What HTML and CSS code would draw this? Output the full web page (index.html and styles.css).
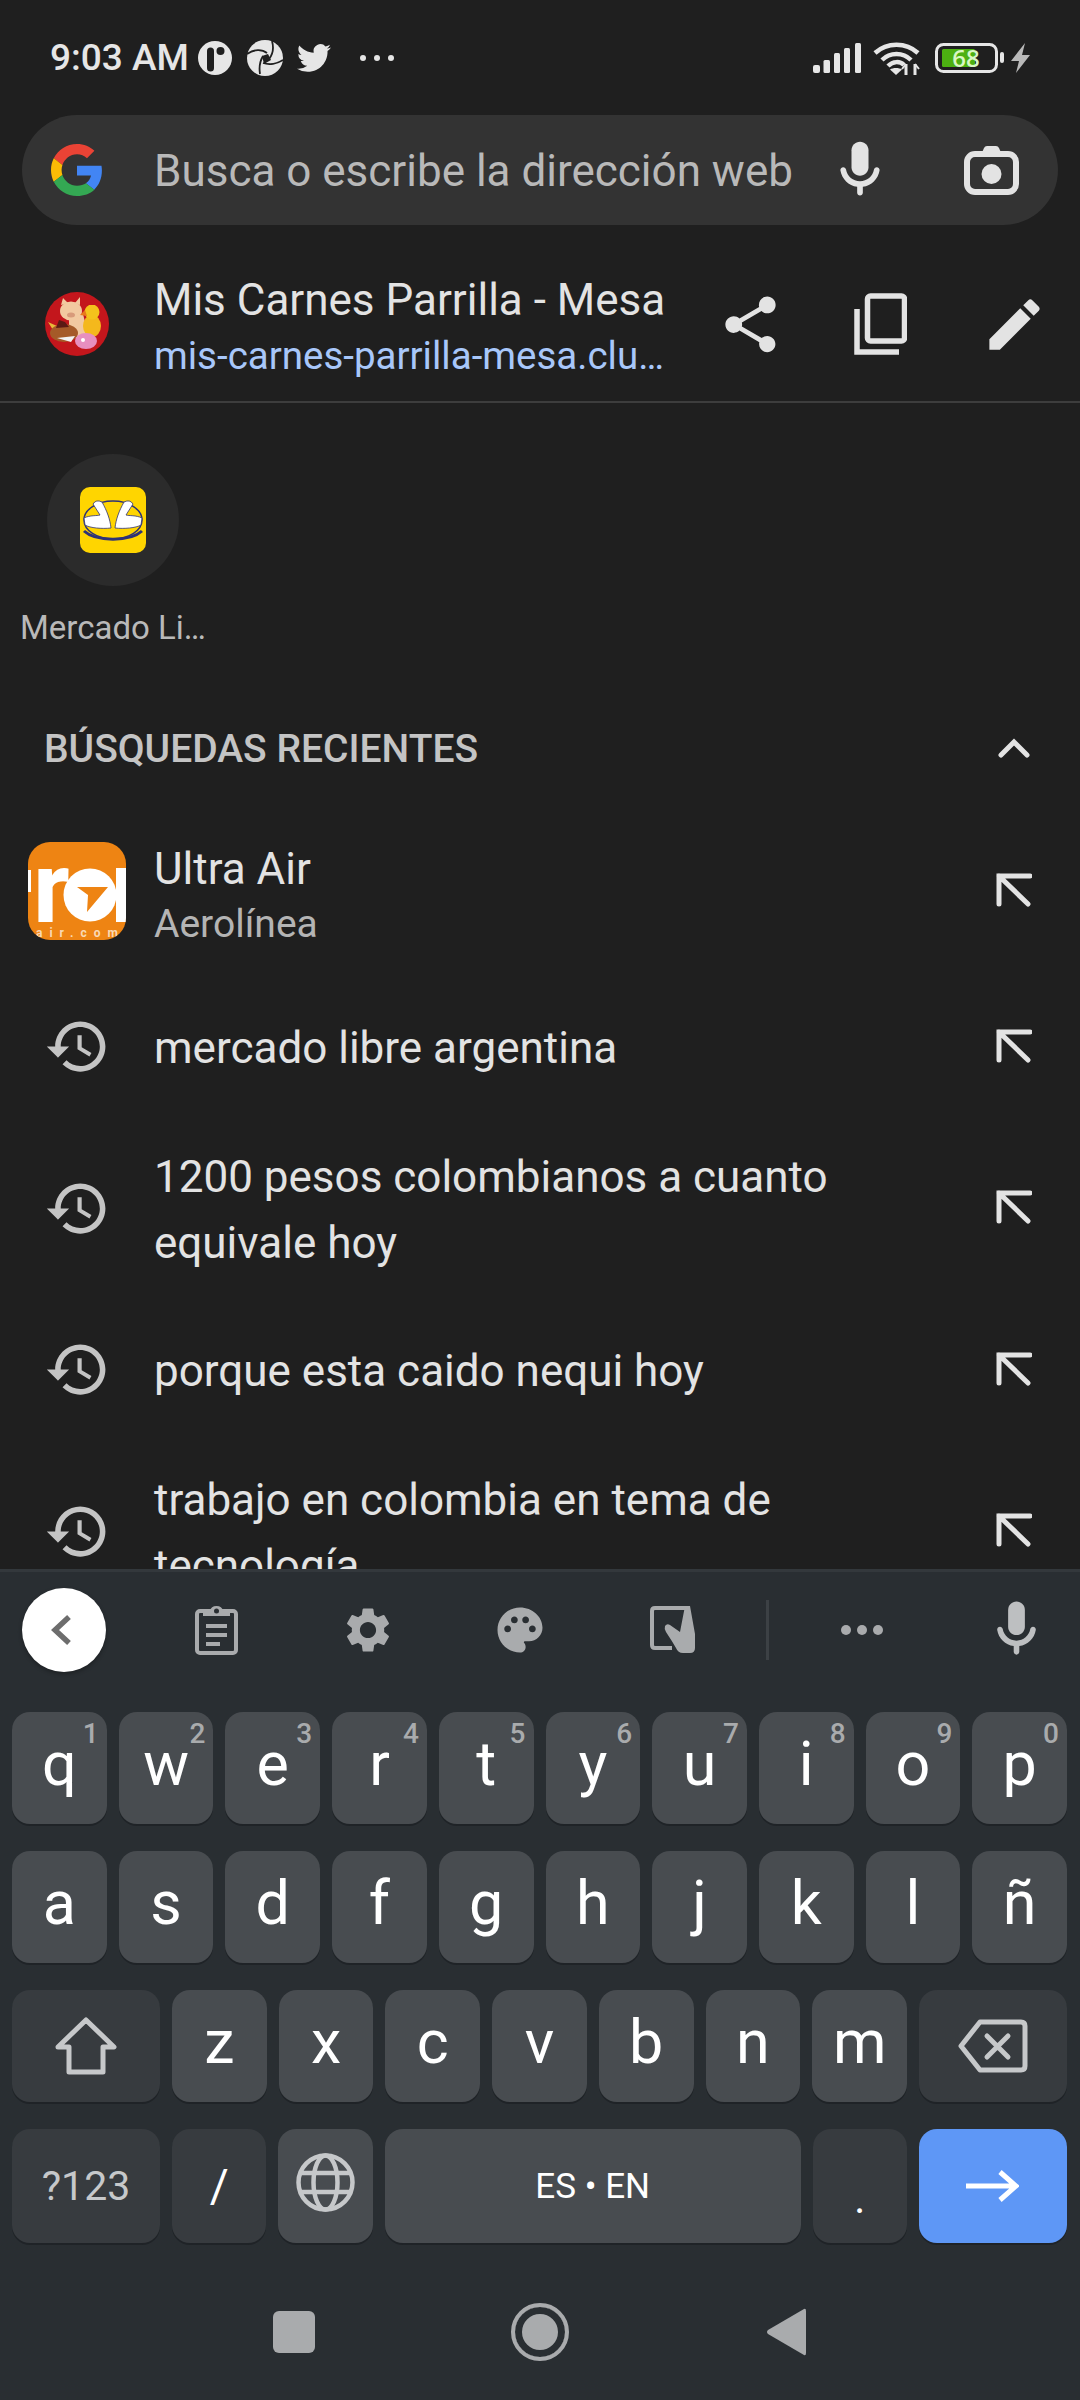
FILE: index.html
```html
<!DOCTYPE html>
<html lang="es">
<head>
    <meta charset="UTF-8">
    <meta name="viewport" content="width=device-width, initial-scale=1.0">
    <title>Nueva pestaña</title>
    <link rel="stylesheet" href="styles.css">
</head>
<body>

<svg class="defs" width="0" height="0">
    <symbol id="history" viewBox="0 0 24 24"><path d="M13 3c-4.97 0-9 4.03-9 9H1l3.89 3.89.07.14L9 12H6c0-3.87 3.13-7 7-7s7 3.13 7 7-3.13 7-7 7c-1.93 0-3.68-.79-4.94-2.06l-1.42 1.42C8.27 19.99 10.51 21 13 21c4.97 0 9-4.03 9-9s-4.03-9-9-9zm-1 5v5l4.28 2.54.72-1.21-3.5-2.08V8H12z"/></symbol>
    <symbol id="fill-up" viewBox="0 0 36 34"><path d="M3 31V3H34M3 3L32 31" fill="none" stroke="currentColor" stroke-width="5" stroke-linecap="round"/></symbol>
    <symbol id="mic" viewBox="0 0 24 24"><path d="M12 14c1.66 0 3-1.34 3-3V5c0-1.66-1.34-3-3-3S9 3.34 9 5v6c0 1.66 1.34 3 3 3z"/><path d="M17.91 11c-.49 0-.9.36-.98.85C16.52 14.2 14.47 16 12 16s-4.52-1.8-4.93-4.15c-.08-.49-.49-.85-.98-.85-.61 0-1.09.54-1 1.14.49 3 2.89 5.35 5.91 5.78V20c0 .55.45 1 1 1s1-.45 1-1v-2.08c3.02-.43 5.42-2.78 5.91-5.78.1-.6-.39-1.14-1-1.14z"/></symbol>
</svg>

<div class="screen">
    <div class="browser">
        <div class="status-bar">
            <div class="status-left">
                <span class="time">9:03 AM</span>
                <svg class="st-pill" viewBox="0 0 34 34"><circle cx="17" cy="17" r="17" fill="#e6e6e6"/><path d="M12.5 10v17" stroke="#1f1f1f" stroke-width="7" stroke-linecap="round"/><circle cx="22.5" cy="10" r="4" fill="#1f1f1f"/></svg>
                <svg class="st-aperture" viewBox="0 0 36 36"><circle cx="18" cy="18" r="18" fill="#e6e6e6"/><path d="M0 14C7 9 15 9 20 13M25 1C27 8 26 14 22 19M36 20C30 24 22 25 16 23M13 34C12 28 13 21 16 16" fill="none" stroke="#1f1f1f" stroke-width="1.800"/><path d="M15 16L21 14L24 20L17 24Z" fill="#1f1f1f"/></svg>
                <svg class="st-twitter" viewBox="0 0 24 24"><path fill="#e6e6e6" d="M23.953 4.57a10 10 0 01-2.825.775 4.958 4.958 0 002.163-2.723c-.951.555-2.005.959-3.127 1.184a4.92 4.92 0 00-8.384 4.482C7.69 8.095 4.067 6.13 1.64 3.162a4.822 4.822 0 00-.666 2.475c0 1.71.87 3.213 2.188 4.096a4.904 4.904 0 01-2.228-.616v.06a4.923 4.923 0 003.946 4.827 4.996 4.996 0 01-2.212.085 4.936 4.936 0 004.604 3.417 9.867 9.867 0 01-6.102 2.105c-.39 0-.779-.023-1.17-.067a13.995 13.995 0 007.557 2.209c9.053 0 13.998-7.496 13.998-13.985 0-.21 0-.42-.015-.63A9.935 9.935 0 0024 4.59z"/></svg>
                <div class="st-dots"><i></i><i></i><i></i></div>
            </div>
            <div class="status-right">
                <svg class="st-signal" viewBox="0 0 48 30" fill="#e6e6e6"><rect x="0" y="22" width="7" height="8" rx="2"/><rect x="10.500" y="17" width="6.500" height="13" rx="1.500"/><rect x="21" y="10" width="6" height="20" rx="1.500"/><rect x="31" y="5" width="6" height="25" rx="1.500"/><rect x="42" y="0" width="6" height="30" rx="1.500"/></svg>
                <svg class="st-wifi" viewBox="0 0 47 34" fill="none" stroke="#e6e6e6" stroke-width="4.500"><path d="M2 12C14 1 33 1 45 12"/><path d="M9 19C17 11 30 11 38 19"/><path d="M15 25C20 20 27 20 31 24"/><path d="M23 34L17 28.500C20 26.500 26 26.500 29 28.500Z" fill="#e6e6e6" stroke="none"/><path d="M33 23V34M42 23V34" stroke-width="3"/><path d="M29 28L33 23M46 28L42 23" stroke-width="2"/></svg>
                <svg class="st-battery" viewBox="0 0 69 30"><rect x="1.500" y="1.500" width="60" height="27" rx="7" fill="none" stroke="#e6e6e6" stroke-width="3"/><rect x="7" y="6" width="33" height="18" rx="1.500" fill="#4cb011"/><text x="31" y="23.500" text-anchor="middle" class="st-level">68</text><rect x="65" y="9" width="4" height="11" rx="2" fill="#e6e6e6"/></svg>
                <svg class="st-bolt" viewBox="0 0 19 30"><path fill="#b9b9b9" d="M14 0L0 18H8L5 30L19 12H11Z"/></svg>
            </div>
        </div>

        <div class="search-pill">
            <svg class="g-logo" viewBox="0 0 48 48">
                <path fill="#EA4335" d="M24 9.500c3.540 0 6.710 1.220 9.210 3.600l6.850-6.850C35.900 2.380 30.470 0 24 0 14.620 0 6.510 5.380 2.560 13.220l7.980 6.190C12.430 13.720 17.740 9.500 24 9.500z"/>
                <path fill="#4285F4" d="M46.980 24.550c0-1.570-.15-3.090-.38-4.550H24v9.020h12.940c-.58 2.960-2.260 5.480-4.780 7.180l7.730 6c4.510-4.180 7.090-10.360 7.090-17.650z"/>
                <path fill="#FBBC05" d="M10.530 28.590c-.48-1.450-.76-2.990-.76-4.590s.27-3.140.76-4.590l-7.980-6.190C.92 16.460 0 20.120 0 24c0 3.880.92 7.540 2.560 10.780l7.970-6.190z"/>
                <path fill="#34A853" d="M24 48c6.480 0 11.930-2.130 16.030-5.810l-7.730-6c-2.150 1.450-4.920 2.300-8.300 2.300-6.260 0-11.570-4.220-13.470-9.910l-7.980 6.190C6.510 42.620 14.620 48 24 48z"/>
            </svg>
            <span class="search-text">Busca o escribe la dirección web</span>
            <svg class="pill-mic"><use href="#mic"/></svg>
            <svg class="pill-cam" viewBox="0 0 55 49"><path d="M17 9L20 2Q21 0 23 0H32Q34 0 35 2L38 9Z" fill="#e3e3e3"/><rect x="3" y="8" width="49" height="38" rx="8" fill="none" stroke="#e3e3e3" stroke-width="6"/><circle cx="27.500" cy="28" r="10" fill="#e3e3e3"/></svg>
        </div>

        <div class="page-row">
            <div class="slot">
                <svg class="favicon" viewBox="0 0 64 64">
                    <circle cx="32" cy="32" r="32" fill="#c3161c"/>
                    <path d="M24 22L38 22L44 46H24Z" fill="#f2c9a0"/>
                    <path d="M16 13L18 6L23 11ZM30 11L35 5L35 13Z" fill="#f2c9a0"/>
                    <ellipse cx="26" cy="19" rx="11" ry="9.500" fill="#f2c9a0"/>
                    <ellipse cx="26" cy="23" rx="4" ry="2.500" fill="#d89a7a"/>
                    <ellipse cx="47" cy="34" rx="9" ry="11" fill="#f4b81c"/>
                    <circle cx="47" cy="20" r="7.500" fill="#f4c21c"/>
                    <path d="M40 18L35 23L42 24Z" fill="#e8791a"/>
                    <path d="M44 13L47 7L51 13Z" fill="#c3161c"/>
                    <path d="M3 30L12 34L8 38Z" fill="#e8b93a"/>
                    <ellipse cx="19" cy="41" rx="14" ry="9" fill="#a55a28"/>
                    <path d="M11 36L14 28L20 30L24 35Z" fill="#5b1a14"/>
                    <path d="M12 46L30 44L26 50Z" fill="#f2f2f2"/>
                    <ellipse cx="41" cy="49" rx="11" ry="8" fill="#e78fc0"/>
                    <circle cx="38" cy="48" r="2" fill="#fff"/>
                </svg>
            </div>
            <div class="page-text">
                <div class="page-title">Mis Carnes Parrilla - Mesa</div>
                <div class="page-url">mis-carnes-parrilla-mesa.clu…</div>
            </div>
            <svg class="icon-share" viewBox="0 0 24 24"><path d="M18 16.080c-.76 0-1.440.3-1.960.77L8.910 12.700c.05-.23.09-.46.09-.7s-.04-.47-.09-.7l7.050-4.110c.54.5 1.250.81 2.040.81 1.660 0 3-1.340 3-3s-1.340-3-3-3-3 1.340-3 3c0 .24.04.47.09.7L8.040 9.810C7.500 9.310 6.790 9 6 9c-1.660 0-3 1.340-3 3s1.340 3 3 3c.79 0 1.500-.31 2.040-.81l7.120 4.160c-.05.21-.08.43-.08.65 0 1.610 1.310 2.920 2.920 2.920 1.610 0 2.920-1.310 2.920-2.920s-1.310-2.920-2.920-2.920z"/></svg>
            <svg class="icon-copy" viewBox="0 0 53 62" fill="none" stroke="#e3e3e3" stroke-width="5.500"><rect x="13.500" y="3" width="37" height="45" rx="3"/><path d="M3 16V59H45"/></svg>
            <svg class="icon-edit" viewBox="0 0 24 24"><path d="M3 17.250V21h3.750L17.810 9.940l-3.750-3.750L3 17.250zM20.710 7.040c.39-.39.39-1.020 0-1.410l-2.340-2.340c-.39-.39-1.020-.39-1.410 0l-1.830 1.830 3.750 3.750 1.830-1.830z"/></svg>
        </div>

        <div class="tile">
            <div class="tile-circle">
                <svg class="tile-logo" viewBox="0 0 66 66">
                    <rect width="66" height="66" rx="10" fill="#ffd500"/>
                    <ellipse cx="33" cy="33" rx="29" ry="19" fill="#ffd500" stroke="#2d3277" stroke-width="1.500"/>
                    <path d="M4 44C16 55 50 55 62 44" fill="none" stroke="#2d3277" stroke-width="3"/>
                    <path d="M4 31C10 28 17 29 20 28L13 17Q16 12 22 15C27 24 30 32 31 41C22 42 10 41 5 38Z" fill="#fff" stroke="#2d3277" stroke-width=".8"/>
                    <path d="M62 31C56 28 49 29 46 28L53 17Q50 12 44 15C39 24 36 32 35 41C44 42 56 41 61 38Z" fill="#fff" stroke="#2d3277" stroke-width=".8"/>
                </svg>
            </div>
            <div class="tile-label">Mercado Li…</div>
        </div>

        <div class="section-head">
            <span>BÚSQUEDAS RECIENTES</span>
            <svg class="chevron" viewBox="0 0 32 20"><path d="M3 17L16 4L29 17" fill="none" stroke="currentColor" stroke-width="5" stroke-linecap="round"/></svg>
        </div>

        <div class="results">
            <div class="result first">
                <div class="slot">
                    <svg class="ultra" viewBox="0 0 98 98">
                        <rect width="98" height="98" fill="#ee8413"/>
                        <rect x="0" y="28" width="3" height="22" fill="#fff"/>
                        <text x="5" y="80" class="ultra-r">r</text>
                        <circle cx="62" cy="53" r="26.500" fill="#fff"/>
                        <rect x="88" y="26" width="10" height="54" fill="#fff"/>
                        <path d="M49 45L80 45L59 70L60 53Z" fill="#ee8413"/>
                        <text x="8" y="95" class="ultra-dom">air.com</text>
                    </svg>
                </div>
                <div class="result-text">
                    <div>Ultra Air</div>
                    <div class="result-sub">Aerolínea</div>
                </div>
                <div class="arrow-slot"><svg class="fill-up"><use href="#fill-up"/></svg></div>
            </div>
            <div class="result">
                <div class="slot"><svg class="hist"><use href="#history"/></svg></div>
                <div class="result-text">mercado libre argentina</div>
                <div class="arrow-slot"><svg class="fill-up"><use href="#fill-up"/></svg></div>
            </div>
            <div class="result">
                <div class="slot"><svg class="hist"><use href="#history"/></svg></div>
                <div class="result-text">1200 pesos colombianos a cuanto equivale hoy</div>
                <div class="arrow-slot"><svg class="fill-up"><use href="#fill-up"/></svg></div>
            </div>
            <div class="result">
                <div class="slot"><svg class="hist"><use href="#history"/></svg></div>
                <div class="result-text">porque esta caido nequi hoy</div>
                <div class="arrow-slot"><svg class="fill-up"><use href="#fill-up"/></svg></div>
            </div>
            <div class="result">
                <div class="slot"><svg class="hist"><use href="#history"/></svg></div>
                <div class="result-text">trabajo en colombia en tema de tecnología</div>
                <div class="arrow-slot"><svg class="fill-up"><use href="#fill-up"/></svg></div>
            </div>
        </div>
    </div>

    <div class="keyboard">
        <div class="toolbar">
            <div class="tb-back"><svg viewBox="0 0 22 32"><path d="M18 3L4 16L18 29" fill="none" stroke="#6d6d6d" stroke-width="5.500"/></svg></div>
            <div class="tb-slot"><svg class="tb-clip" viewBox="0 0 43 51" fill="none" stroke="#a9abad" stroke-width="4"><rect x="2" y="7" width="39" height="42" rx="3"/><path d="M8 12V7H15Q16 2 21.500 2T28 7H35V12Z" fill="#a9abad" stroke="none"/><circle cx="21.500" cy="7" r="2.500" fill="#292e32" stroke="none"/><path d="M11 22H32M11 31H32M11 40H25"/></svg></div>
            <div class="tb-slot"><svg class="tb-gear" viewBox="0 0 24 24"><path d="M19.140 12.940c.04-.3.06-.61.06-.94 0-.32-.02-.64-.07-.94l2.030-1.580c.18-.14.23-.41.12-.61l-1.920-3.320c-.12-.22-.37-.29-.59-.22l-2.390.96c-.5-.38-1.030-.7-1.620-.94l-.36-2.540c-.04-.24-.24-.41-.48-.41h-3.840c-.24 0-.43.17-.47.41l-.36 2.540c-.59.24-1.130.57-1.620.94l-2.390-.96c-.22-.08-.47 0-.59.22L2.740 8.870c-.12.21-.08.47.12.61l2.030 1.580c-.05.3-.09.63-.09.94s.02.64.07.94l-2.030 1.580c-.18.14-.23.41-.12.61l1.920 3.320c.12.22.37.29.59.22l2.390-.96c.5.38 1.030.7 1.620.94l.36 2.540c.05.24.24.41.48.41h3.840c.24 0 .44-.17.47-.41l.36-2.540c.59-.24 1.130-.56 1.620-.94l2.390.96c.22.08.47 0 .59-.22l1.920-3.320c.12-.22.07-.47-.12-.61l-2.010-1.580zM12 15.600c-1.980 0-3.600-1.620-3.600-3.600s1.620-3.600 3.600-3.600 3.600 1.620 3.600 3.600-1.620 3.600-3.600 3.600z"/></svg></div>
            <div class="tb-slot"><svg class="tb-gear" viewBox="0 0 24 24"><path d="M12 2C6.490 2 2 6.490 2 12s4.490 10 10 10c1.380 0 2.500-1.120 2.500-2.500 0-.61-.23-1.200-.64-1.670-.08-.1-.13-.21-.13-.33 0-.28.22-.5.5-.5H16c3.310 0 6-2.690 6-6 0-4.960-4.490-9-10-9zm5.500 11c-.83 0-1.500-.67-1.500-1.500s.67-1.500 1.500-1.500 1.500.67 1.500 1.500-.67 1.500-1.500 1.500zm-3-4c-.83 0-1.500-.67-1.500-1.500S13.670 6 14.500 6s1.500.67 1.500 1.500S15.330 9 14.500 9zM5 11.500c0-.83.67-1.500 1.500-1.500s1.500.67 1.500 1.500S7.330 13 6.500 13 5 12.330 5 11.500zm6-4c0 .83-.67 1.500-1.500 1.500S8 8.330 8 7.500 8.670 6 9.500 6s1.500.67 1.500 1.500z"/></svg></div>
            <div class="tb-slot"><svg class="tb-crop" viewBox="0 0 45 47"><path d="M22 42H5Q2 42 2 39V5Q2 2 5 2H37" fill="none" stroke="#a9abad" stroke-width="4"/><path d="M15 20Q17 17 20 19L30 26L35 0H40L45 28V42Q45 47 40 47H33Q28 47 26 42Q22 35 16 26Q14 23 15 20Z" fill="#a9abad"/></svg></div>
            <div class="tb-divider"></div>
            <div class="tb-dots"><i></i><i></i><i></i></div>
            <div class="tb-mic"><svg><use href="#mic"/></svg></div>
        </div>

        <div class="keys">
            <div class="key-row">
                <div class="key">q<sup>1</sup></div>
                <div class="key">w<sup>2</sup></div>
                <div class="key">e<sup>3</sup></div>
                <div class="key">r<sup>4</sup></div>
                <div class="key">t<sup>5</sup></div>
                <div class="key">y<sup>6</sup></div>
                <div class="key">u<sup>7</sup></div>
                <div class="key">i<sup>8</sup></div>
                <div class="key">o<sup>9</sup></div>
                <div class="key">p<sup>0</sup></div>
            </div>
            <div class="key-row">
                <div class="key">a</div>
                <div class="key">s</div>
                <div class="key">d</div>
                <div class="key">f</div>
                <div class="key">g</div>
                <div class="key">h</div>
                <div class="key">j</div>
                <div class="key">k</div>
                <div class="key">l</div>
                <div class="key">ñ</div>
            </div>
            <div class="key-row">
                <div class="key wide mod"><svg class="k-shift" viewBox="0 0 62 58"><path d="M31 3L59 30H48V55H14V30H3Z" fill="none" stroke="#c6c8ca" stroke-width="5" stroke-linejoin="round"/></svg></div>
                <div class="key">z</div>
                <div class="key">x</div>
                <div class="key">c</div>
                <div class="key">v</div>
                <div class="key">b</div>
                <div class="key">n</div>
                <div class="key">m</div>
                <div class="key wide mod"><svg class="k-del" viewBox="0 0 70 54" fill="none" stroke="#c6c8ca" stroke-width="5" stroke-linejoin="round"><path d="M22 3H63Q67 3 67 7V47Q67 51 63 51H22L3 27Z"/><path d="M29 17L50 38M50 17L29 38" stroke-linecap="round"/></svg></div>
            </div>
            <div class="key-row last">
                <div class="key wide mod small">?123</div>
                <div class="key mod slash">/</div>
                <div class="key"><svg class="k-globe" viewBox="0 0 59 59" fill="none" stroke="#c6c8ca" stroke-width="4.500"><circle cx="29.500" cy="29.500" r="27"/><ellipse cx="29.500" cy="29.500" rx="12" ry="27"/><path d="M5 20H54M5 39H54"/></svg></div>
                <div class="key space">ES • EN</div>
                <div class="key mod dot">.</div>
                <div class="key wide go"><svg class="k-go" viewBox="0 0 53 32" fill="none" stroke="#fff" stroke-width="5"><path d="M0 16H50M34 2L50 16L34 30"/></svg></div>
            </div>
        </div>

        <div class="nav-bar">
            <div class="nav-slot"><div class="nav-square"></div></div>
            <div class="nav-slot"><div class="nav-home"></div></div>
            <div class="nav-slot"><svg class="nav-back" viewBox="0 0 39 48"><path d="M37 1Q39 0 39 3V45Q39 48 37 47L1 26Q-1 24 1 22Z" fill="#a9abad"/></svg></div>
        </div>
    </div>
</div>

</body>
</html>
```

FILE: styles.css
```css
body {
    margin: 0;
    background-color: #1f1f1f;
    font-family: Roboto, sans-serif;
    color: #e3e3e3;
}
svg {
    display: block;
    flex-shrink: 0;
}
.defs {
    position: absolute;
}
.screen {
    width: 1080px;
    height: 2400px;
    display: flex;
    flex-direction: column;
    overflow: hidden;
}

/* browser part */
.browser {
    height: 1569px;
    overflow: hidden;
    flex-shrink: 0;
}
.status-bar {
    height: 115px;
    box-sizing: border-box;
    padding: 0 50px 0 50px;
    display: flex;
    justify-content: space-between;
    align-items: center;
}
.status-left, .status-right {
    display: flex;
    align-items: center;
}
.time {
    font-size: 37px;
    font-weight: 500;
    color: #e6e6e6;
}
.st-pill {
    width: 34px;
    height: 34px;
    margin-left: 9px;
}
.st-aperture {
    width: 36px;
    height: 36px;
    margin-left: 15px;
}
.st-twitter {
    width: 34px;
    height: 34px;
    margin-left: 14px;
}
.st-dots {
    display: flex;
    gap: 8px;
    margin-left: 29px;
}
.st-dots i {
    width: 6px;
    height: 6px;
    border-radius: 50%;
    background-color: #e6e6e6;
}
.st-signal {
    width: 48px;
    height: 30px;
}
.st-wifi {
    width: 47px;
    height: 34px;
    margin-left: 12px;
}
.st-battery {
    width: 69px;
    height: 30px;
    margin-left: 15px;
}
.st-level {
    font-family: "Open Sans", sans-serif;
    font-size: 24px;
    font-weight: 600;
    fill: #d9f7c4;
}
.st-bolt {
    width: 19px;
    height: 30px;
    margin-left: 7px;
}

.search-pill {
    height: 110px;
    margin: 0 22px;
    background-color: #333333;
    border-radius: 55px;
    display: flex;
    align-items: center;
}
.g-logo {
    width: 52px;
    height: 52px;
    margin-left: 29px;
}
.search-text {
    margin: 2px 1px 0 51px;
    width: 640px;
    font-size: 44px;
    color: #b9b9b9;
    white-space: nowrap;
}
.pill-mic {
    width: 68px;
    height: 68px;
    margin-left: 31px;
    fill: #e3e3e3;
}
.pill-cam {
    width: 55px;
    height: 49px;
    margin-left: 70px;
}

.page-row {
    height: 176px;
    border-bottom: 2px solid #3d3d3d;
    display: flex;
    align-items: center;
}
.page-row > * {
    margin-top: 22px;
}
.slot {
    width: 154px;
    flex-shrink: 0;
    display: flex;
    justify-content: center;
}
.favicon {
    width: 64px;
    height: 64px;
}
.page-row .page-text {
    width: 546px;
    margin-top: 28px;
    white-space: nowrap;
}
.page-title {
    font-size: 44px;
    line-height: 56px;
}
.page-url {
    font-size: 38.500px;
    line-height: 55px;
    color: #a8c7fa;
}
.icon-share {
    width: 67px;
    height: 67px;
    margin-left: 17px;
    fill: #e3e3e3;
}
.icon-copy {
    width: 53px;
    height: 62px;
    margin-left: 70px;
}
.icon-edit {
    width: 67px;
    height: 67px;
    margin-left: 74px;
    fill: #e3e3e3;
}

.tile {
    width: 185px;
    margin: 51px 0 0 20px;
    text-align: center;
}
.tile-circle {
    width: 132px;
    height: 132px;
    margin: 0 auto;
    border-radius: 50%;
    background-color: #2b2b2b;
    display: flex;
    align-items: center;
    justify-content: center;
}
.tile-logo {
    width: 66px;
    height: 66px;
}
.tile-label {
    margin-top: 21px;
    font-size: 33px;
    line-height: 42px;
    color: #b9b9b9;
    white-space: nowrap;
}

.section-head {
    height: 60px;
    margin-top: 70px;
    padding: 0 50px 0 44px;
    display: flex;
    justify-content: space-between;
    align-items: center;
    font-size: 39px;
    font-weight: 500;
    color: #c4c4c4;
}
.chevron {
    width: 32px;
    height: 20px;
    margin-top: -2px;
    color: #e3e3e3;
}

.results {
    margin-top: 36px;
}
.result {
    height: 161.500px;
    display: flex;
    align-items: center;
}
.result.first {
    height: 151px;
}
.hist {
    width: 67px;
    height: 67px;
    fill: #c4c4c4;
}
.ultra {
    width: 98px;
    height: 98px;
    border-radius: 22px;
}
.ultra-r {
    font-family: Roboto, sans-serif;
    font-size: 100px;
    font-weight: 700;
    fill: #fff;
}
.ultra-dom {
    font-family: Roboto, sans-serif;
    font-size: 12px;
    font-weight: 700;
    letter-spacing: 7px;
    fill: #f9d9b5;
}
.result-text {
    flex: 1;
    margin-top: 3px;
    font-size: 44px;
    line-height: 66px;
}
.result-sub {
    margin-top: -3px;
    font-size: 39px;
    line-height: 50px;
    color: #b4b4b4;
}
.arrow-slot {
    width: 132px;
    flex-shrink: 0;
    display: flex;
    justify-content: center;
}
.fill-up {
    width: 36px;
    height: 34px;
    margin-top: -2px;
    color: #e3e3e3;
}

/* keyboard */
.keyboard {
    flex: 1;
    background-color: #292e32;
    border-top: 3px solid #33383c;
    display: flex;
    flex-direction: column;
}
.toolbar {
    height: 115px;
    flex-shrink: 0;
    padding-left: 22px;
    display: flex;
    align-items: center;
}
.tb-back {
    width: 84px;
    height: 84px;
    border-radius: 50%;
    background-color: #fff;
    box-shadow: 0 2px 4px rgba(0, 0, 0, 0.3);
    display: flex;
    align-items: center;
    justify-content: center;
}
.tb-back svg {
    width: 22px;
    height: 32px;
    margin-right: 4px;
}
.tb-slot {
    width: 152px;
    display: flex;
    justify-content: center;
}
.tb-back + .tb-slot {
    margin-left: 34px;
}
.tb-clip {
    width: 43px;
    height: 51px;
}
.tb-gear {
    width: 54px;
    height: 54px;
    fill: #a9abad;
}
.tb-crop {
    width: 45px;
    height: 47px;
}
.tb-divider {
    width: 3px;
    height: 60px;
    margin-left: 18px;
    background-color: #3c4145;
}
.tb-dots {
    width: 186px;
    display: flex;
    justify-content: center;
    gap: 6px;
}
.tb-dots i {
    width: 10px;
    height: 10px;
    border-radius: 50%;
    background-color: #a9abad;
}
.tb-mic {
    width: 122px;
    display: flex;
    justify-content: center;
    fill: #bdbfc1;
}
.tb-mic svg {
    width: 67px;
    height: 67px;
}

.keys {
    padding: 25px 13px 0 12px;
    display: flex;
    flex-direction: column;
    gap: 27px;
}
.key-row {
    height: 112px;
    display: flex;
    gap: 12px;
}
.key-row.last {
    height: 114px;
}
.key {
    position: relative;
    flex: 1 1 0;
    box-sizing: border-box;
    padding-bottom: 8px;
    background-color: #484c50;
    border-radius: 18px;
    box-shadow: 0 2px 0 #1f2327;
    display: flex;
    align-items: center;
    justify-content: center;
    font-size: 61px;
    color: #fff;
}
.key sup {
    position: absolute;
    top: 2px;
    right: 8px;
    font-size: 28px;
    font-weight: 500;
    line-height: 40px;
    color: #a9abad;
}
.key.mod {
    background-color: #373b3f;
}
.key.wide {
    flex: 0 0 148px;
    padding-bottom: 0;
}
.key.small {
    font-size: 41px;
    color: #c6c8ca;
}
.key.slash {
    font-size: 46px;
    padding-bottom: 0;
}
.key.space {
    flex: 0 0 416px;
    font-size: 35px;
    padding-bottom: 0;
}
.key.dot {
    font-size: 42px;
    align-items: flex-end;
    padding-bottom: 20px;
}
.key.go {
    background-color: #5e97f6;
}
.k-shift {
    width: 62px;
    height: 58px;
}
.k-del {
    width: 70px;
    height: 54px;
}
.k-globe {
    width: 59px;
    height: 59px;
}
.k-go {
    width: 53px;
    height: 32px;
}

.nav-bar {
    flex: 1;
    display: flex;
    justify-content: center;
    align-items: center;
    padding-top: 20px;
}
.nav-slot {
    width: 246px;
    display: flex;
    justify-content: center;
}
.nav-square {
    width: 42px;
    height: 42px;
    border-radius: 6px;
    background-color: #a9abad;
}
.nav-home {
    width: 58px;
    height: 58px;
    box-sizing: border-box;
    border: 4px solid #a9abad;
    border-radius: 50%;
    box-shadow: inset 0 0 0 7px #292e32, inset 0 0 0 40px #a9abad;
}
.nav-back {
    width: 39px;
    height: 48px;
}
```
